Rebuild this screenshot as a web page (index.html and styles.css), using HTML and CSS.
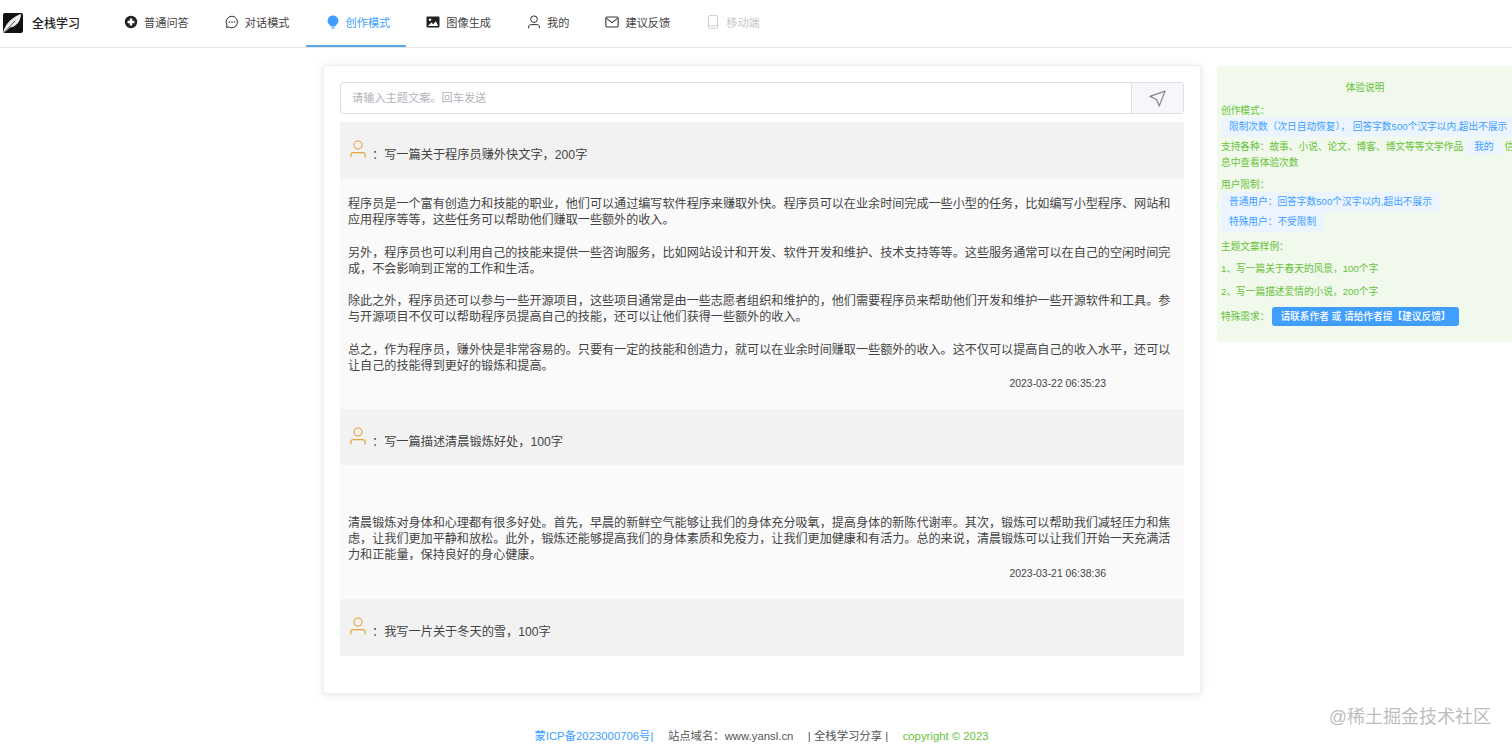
FILE: index.html
```html
<!DOCTYPE html>
<html lang="zh-CN">
<head>
  <meta charset="UTF-8">
  <meta name="viewport" content="width=device-width, initial-scale=1.0">
  <title>全栈学习</title>
  <link rel="stylesheet" href="styles.css">
</head>
<body>
  <!-- 顶部导航 -->
  <nav class="nav">
    <div class="brand">
      <svg class="logo" viewBox="0 0 20 20">
        <rect width="20" height="20" rx="2" fill="#111"/>
        <path d="M0 20C2 11 9 4 18 1C18 8 13 14 7 14.5C5 16.5 3 18.5 0 20Z" fill="#eee"/>
        <path d="M1 19.5L12 8" stroke="#111" stroke-width=".7"/>
      </svg>
      <span>全栈学习</span>
    </div>
    <a class="nav-item">
      <svg class="nav-icon" viewBox="0 0 14 14"><circle cx="7" cy="7" r="6.2" fill="#222"/><path d="M7 3.6V10.4M3.6 7H10.4" stroke="#fff" stroke-width="2.4"/></svg>
      普通问答
    </a>
    <a class="nav-item">
      <svg class="nav-icon" viewBox="0 0 14 14"><path d="M7 1.2A5.8 5.8 0 1 1 3.6 11.9L1.4 12.6L2 10.2A5.8 5.8 0 0 1 7 1.2Z" fill="none" stroke="#333" stroke-width="1"/><circle cx="4.4" cy="7" r=".8" fill="#333"/><circle cx="7" cy="7" r=".8" fill="#333"/><circle cx="9.6" cy="7" r=".8" fill="#333"/></svg>
      对话模式
    </a>
    <a class="nav-item active">
      <svg class="nav-icon" viewBox="0 0 14 14"><path d="M7 .6A5.2 5.2 0 0 1 10.2 10C9.6 10.6 9.4 11 9.4 11.6H4.6C4.6 11 4.4 10.6 3.8 10A5.2 5.2 0 0 1 7 .6Z" fill="#409eff"/><path d="M5 12.6H9L8 13.8H6Z" fill="#409eff"/></svg>
      创作模式
    </a>
    <a class="nav-item">
      <svg class="nav-icon" viewBox="0 0 14 14"><rect x=".5" y="1.6" width="13" height="10.8" rx=".8" fill="#222"/><circle cx="4" cy="4.8" r="1.2" fill="#fff"/><path d="M2 11L5.4 7.6L7.2 9.2L9.8 6.2L12.2 11Z" fill="#fff"/></svg>
      图像生成
    </a>
    <a class="nav-item">
      <svg class="nav-icon" viewBox="0 0 14 14"><circle cx="7" cy="4.2" r="3.3" fill="none" stroke="#333" stroke-width="1"/><path d="M1.6 13.4V12C1.6 10.4 2.8 9.6 4 9.6H10C11.2 9.6 12.4 10.4 12.4 12V13.4" fill="none" stroke="#333" stroke-width="1"/></svg>
      我的
    </a>
    <a class="nav-item">
      <svg class="nav-icon" viewBox="0 0 14 14"><rect x=".8" y="2" width="12.4" height="10" rx="1.6" fill="none" stroke="#333" stroke-width="1.1"/><path d="M1.4 3.4L7 7.6L12.6 3.4" fill="none" stroke="#333" stroke-width="1.1"/></svg>
      建议反馈
    </a>
    <a class="nav-item disabled">
      <svg class="nav-icon" viewBox="0 0 14 14"><rect x="2.5" y=".6" width="9" height="12.8" rx="1.2" fill="none" stroke="#ccc" stroke-width="1"/><path d="M2.5 10.8H11.5" stroke="#ccc" stroke-width="1"/></svg>
      移动端
    </a>
  </nav>

  <main class="main">
    <section class="card">
      <div class="search">
        <div class="search-input">请输入主题文案。回车发送</div>
        <div class="search-btn">
          <svg class="send-icon" viewBox="0 0 18 18"><path d="M17 1.2L1 6.8L8 10L10.8 17Z" fill="none" stroke="#888" stroke-width="1.3" stroke-linejoin="round"/></svg>
        </div>
      </div>

      <div class="question">
        <svg class="user-icon" viewBox="0 0 16 18"><circle cx="8" cy="5" r="4" fill="none" stroke="#e6a23c" stroke-width="1.1"/><path d="M.8 17.4V15.4C.8 13.6 2 12.6 3.4 12.6H12.6C14 12.6 15.2 13.6 15.2 15.4V17.4" fill="none" stroke="#e6a23c" stroke-width="1.1"/></svg>
        <span>：写一篇关于程序员赚外快文字，200字</span>
      </div>
      <div class="answer">
        <p>程序员是一个富有创造力和技能的职业，他们可以通过编写软件程序来赚取外快。程序员可以在业余时间完成一些小型的任务，比如编写小型程序、网站和应用程序等等，这些任务可以帮助他们赚取一些额外的收入。</p>
        <p>另外，程序员也可以利用自己的技能来提供一些咨询服务，比如网站设计和开发、软件开发和维护、技术支持等等。这些服务通常可以在自己的空闲时间完成，不会影响到正常的工作和生活。</p>
        <p>除此之外，程序员还可以参与一些开源项目，这些项目通常是由一些志愿者组织和维护的，他们需要程序员来帮助他们开发和维护一些开源软件和工具。参与开源项目不仅可以帮助程序员提高自己的技能，还可以让他们获得一些额外的收入。</p>
        <p>总之，作为程序员，赚外快是非常容易的。只要有一定的技能和创造力，就可以在业余时间赚取一些额外的收入。这不仅可以提高自己的收入水平，还可以让自己的技能得到更好的锻炼和提高。</p>
        <div class="time">2023-03-22 06:35:23</div>
      </div>

      <div class="question">
        <svg class="user-icon" viewBox="0 0 16 18"><circle cx="8" cy="5" r="4" fill="none" stroke="#e6a23c" stroke-width="1.1"/><path d="M.8 17.4V15.4C.8 13.6 2 12.6 3.4 12.6H12.6C14 12.6 15.2 13.6 15.2 15.4V17.4" fill="none" stroke="#e6a23c" stroke-width="1.1"/></svg>
        <span>：写一篇描述清晨锻炼好处，100字</span>
      </div>
      <div class="answer answer-gap">
        <p>清晨锻炼对身体和心理都有很多好处。首先，早晨的新鲜空气能够让我们的身体充分吸氧，提高身体的新陈代谢率。其次，锻炼可以帮助我们减轻压力和焦虑，让我们更加平静和放松。此外，锻炼还能够提高我们的身体素质和免疫力，让我们更加健康和有活力。总的来说，清晨锻炼可以让我们开始一天充满活力和正能量，保持良好的身心健康。</p>
        <div class="time">2023-03-21 06:38:36</div>
      </div>

      <div class="question">
        <svg class="user-icon" viewBox="0 0 16 18"><circle cx="8" cy="5" r="4" fill="none" stroke="#e6a23c" stroke-width="1.1"/><path d="M.8 17.4V15.4C.8 13.6 2 12.6 3.4 12.6H12.6C14 12.6 15.2 13.6 15.2 15.4V17.4" fill="none" stroke="#e6a23c" stroke-width="1.1"/></svg>
        <span>：我写一片关于冬天的雪，100字</span>
      </div>
    </section>

    <!-- 右侧说明 -->
    <aside class="tips">
      <div class="tips-title">体验说明</div>
      <div class="tips-line">创作模式：</div>
      <div><span class="tag wide">限制次数（次日自动恢复）， 回答字数500个汉字以内,超出不展示</span></div>
      <div class="tips-row">
        <span>支持各种：故事、小说、论文、博客、博文等等文学作品</span>
        <span class="tag">我的</span>
        <span>信</span>
      </div>
      <div class="tips-next">息中查看体验次数</div>
      <div class="tips-line mt">用户限制：</div>
      <div><span class="tag">普通用户：回答字数500个汉字以内,超出不展示</span></div>
      <div><span class="tag">特殊用户：不受限制</span></div>
      <div class="tips-line mt2">主题文案样例：</div>
      <div class="tips-line mt3">1、写一篇关于春天的风景，100个字</div>
      <div class="tips-line mt4">2、写一篇描述爱情的小说，200个字</div>
      <div class="tips-need">特殊需求：<span class="need-btn">请联系作者 或 请给作者提【建议反馈】</span></div>
    </aside>
  </main>

  <footer class="footer">
    <span class="blue">蒙ICP备2023000706号|</span>
    <span class="gray">站点域名：www.yansl.cn</span>
    <span class="gray">| 全栈学习分享 |</span>
    <span class="green">copyright © 2023</span>
  </footer>

  <div class="watermark">@稀土掘金技术社区</div>
</body>
</html>
```

FILE: styles.css
```css
* {
  box-sizing: border-box;
}
html, body {
  height: 749px;
  overflow: hidden;
}
body {
  margin: 0;
  background: #fff;
  color: #333;
  font-family: "Liberation Sans", "Noto Sans CJK SC", sans-serif;
  font-size: 12px;
}

/* 导航 */
.nav {
  display: flex;
  height: 48px;
  border-bottom: 1px solid #e6e6e6;
}
.brand {
  display: flex;
  align-items: center;
  gap: 9px;
  width: 104px;
  padding: 0 0 2px 3px;
  font-size: 12px;
  font-weight: 500;
  color: #222;
}
.logo {
  width: 20px;
  height: 20px;
}
.nav-item {
  display: flex;
  align-items: center;
  gap: 6px;
  height: 47px;
  padding: 0 16px 2px 20px;
  border-bottom: 2px solid transparent;
  font-size: 11.2px;
  color: #444;
}
.nav-icon {
  width: 14px;
  height: 14px;
  flex: none;
}
.nav-item.active {
  color: #409eff;
  border-bottom-color: #5aa7e6;
}
.nav-item.disabled {
  color: #c8c8c8;
}

/* 主体 */
.main {
  display: grid;
  grid-template-columns: 878px 298px;
  gap: 16px;
  align-items: start;
  padding: 17px 0 0 323px;
}
.card {
  height: 629px;
  padding: 16px;
  background: #fff;
  border: 1px solid #eee;
  border-radius: 3px;
  box-shadow: 0 1px 8px rgba(0, 0, 0, .1);
}
.search {
  display: flex;
  height: 32px;
  margin-bottom: 8px;
  border: 1px solid #dcdfe6;
  border-radius: 3px;
}
.search-input {
  flex: 1;
  padding-left: 11px;
  line-height: 30px;
  font-size: 11.2px;
  color: #b0b3b9;
}
.search-btn {
  display: flex;
  align-items: center;
  justify-content: center;
  width: 52px;
  background: #f5f7fa;
  border-left: 1px solid #dcdfe6;
}
.send-icon {
  width: 17px;
  height: 17px;
}
.question {
  display: flex;
  align-items: flex-start;
  height: 56.5px;
  padding: 18px 0 0 10px;
  background: #f2f2f2;
  color: #444;
  font-size: 12.2px;
}
.question span {
  margin-top: 5px;
  margin-left: 6px;
}
.user-icon {
  width: 16px;
  height: 18px;
  flex: none;
}
.answer {
  padding: 17.5px 8px 0;
  height: 230px;
  background: #fafafa;
  line-height: 16px;
  font-size: 12.1px;
  color: #444;
}
.answer p {
  margin: 0 0 16.5px;
}
.answer-gap {
  height: 134px;
  padding-top: 50px;
}
.answer-gap p {
  margin-bottom: 3px;
}
.time {
  margin-top: -14px;
  padding-right: 70px;
  text-align: right;
  font-size: 10.4px;
  color: #444;
}
.answer-gap .time {
  margin-top: 3px;
}

/* 右侧说明 */
.tips {
  width: 298px;
  height: 276px;
  margin-top: 1px;
  padding: 15px 0 0 4px;
  background: #f0f9eb;
  border-radius: 4px;
  color: #67c23a;
  font-size: 9.7px;
  line-height: 13px;
  overflow: hidden;
}
.tips-title {
  height: 13px;
  margin-bottom: 10px;
  padding-right: 6px;
  text-align: center;
}
.tips-line {
  height: 13px;
}
.tag {
  display: inline-block;
  height: 20px;
  padding: 0 8px;
  line-height: 20px;
  background: #ecf5ff;
  border-radius: 3px;
  color: #409eff;
}
.tag.wide {
  white-space: nowrap;
}
.tips-row {
  display: flex;
  gap: 3px;
  margin-top: 2px;
  line-height: 16px;
  white-space: nowrap;
}
.tips-row .tag {
  height: 16px;
  line-height: 16px;
}
.tips-next {
  line-height: 16px;
}
.mt {
  margin-top: 7px;
  margin-bottom: 1px;
}
.mt2 {
  margin-top: 8px;
}
.mt3 {
  margin-top: 8.5px;
}
.mt4 {
  margin-top: 10px;
}
.tips-need {
  display: flex;
  align-items: center;
  margin-top: 9px;
}
.need-btn {
  height: 19px;
  margin-left: 3px;
  padding: 0 8px;
  line-height: 19px;
  background: #409eff;
  border-radius: 3px;
  color: #fff;
  font-weight: 500;
}

/* 页脚 */
.footer {
  display: flex;
  justify-content: center;
  gap: 14.5px;
  margin-top: 34px;
  padding-left: 11px;
  font-size: 11.35px;
  line-height: 16px;
}
.blue { color: #409eff; }
.gray { color: #555; }
.green { color: #67c23a; }

.watermark {
  position: absolute;
  right: 21px;
  top: 705px;
  font-size: 18px;
  line-height: 24px;
  color: rgba(120, 120, 120, .5);
}
```
